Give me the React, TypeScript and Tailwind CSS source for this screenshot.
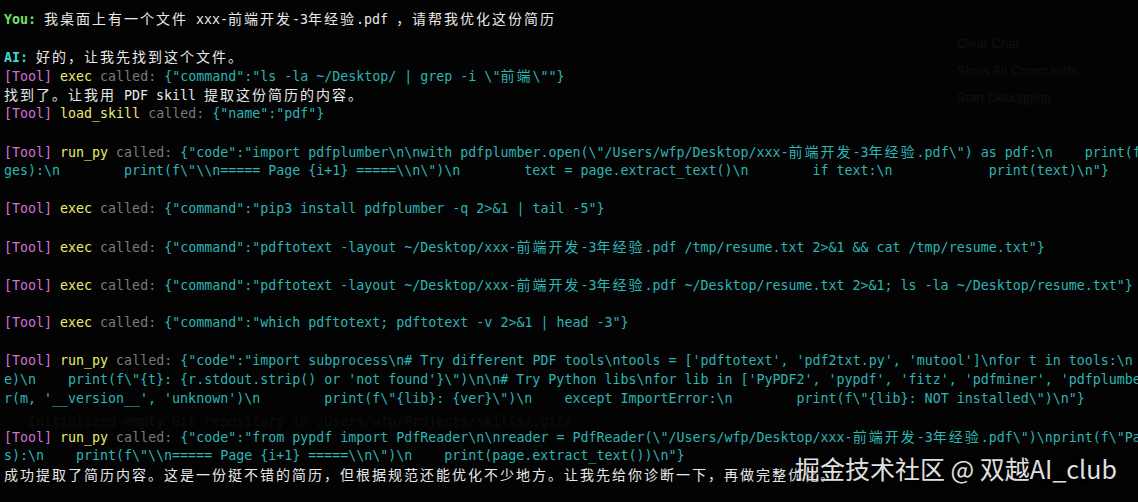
import React from "react";

type Seg = [string, string];

const tone: Record<string, string> = {
  you: "text-[#6fe26f] font-bold",
  ai: "text-[#3fd6d6] font-bold",
  tag: "text-[#d670d6]",
  fn: "text-[#ecec6e]",
  dim: "text-[#7a7a7a]",
  json: "text-[#2cb5b5]",
  txt: "text-[#e8e8e8]",
};

const CJK = /([\u3000-\u303f\u4e00-\u9fff\uff00-\uffef]+)/;

function Run({ text }: { text: string }) {
  return (
    <>
      {text.split(CJK).map((part, i) =>
        CJK.test(part) ? (
          <span key={i} className="font-['Noto_Sans_CJK_SC',sans-serif] text-[14px] tracking-[2px]">
            {part}
          </span>
        ) : (
          part
        )
      )}
    </>
  );
}

const tool = (fn: string, json: string): Seg[] => [
  ["tag", "[Tool]"],
  ["txt", " "],
  ["fn", fn],
  ["dim", " called: "],
  ["json", json],
];

const lines: Seg[][] = [
  [["you", "You:"], ["txt", " 我桌面上有一个文件 xxx-前端开发-3年经验.pdf ，请帮我优化这份简历"]],
  [],
  [["ai", "AI:"], ["txt", " 好的，让我先找到这个文件。"]],
  tool("exec", String.raw`{"command":"ls -la ~/Desktop/ | grep -i \"前端\""}`),
  [["txt", "找到了。让我用 PDF skill 提取这份简历的内容。"]],
  tool("load_skill", `{"name":"pdf"}`),
  [],
  tool("run_py", String.raw`{"code":"import pdfplumber\n\nwith pdfplumber.open(\"/Users/wfp/Desktop/xxx-前端开发-3年经验.pdf\") as pdf:\n    print(f\"Pages: {len(pdf.pages)}\")\n    for i, page in enumerate(pdf.pa`),
  [["json", String.raw`ges):\n        print(f\"\\n===== Page {i+1} =====\\n\")\n        text = page.extract_text()\n        if text:\n            print(text)\n"}`]],
  [],
  tool("exec", `{"command":"pip3 install pdfplumber -q 2>&1 | tail -5"}`),
  [],
  tool("exec", `{"command":"pdftotext -layout ~/Desktop/xxx-前端开发-3年经验.pdf /tmp/resume.txt 2>&1 && cat /tmp/resume.txt"}`),
  [],
  tool("exec", `{"command":"pdftotext -layout ~/Desktop/xxx-前端开发-3年经验.pdf ~/Desktop/resume.txt 2>&1; ls -la ~/Desktop/resume.txt"}`),
  [],
  tool("exec", `{"command":"which pdftotext; pdftotext -v 2>&1 | head -3"}`),
  [],
  tool("run_py", String.raw`{"code":"import subprocess\n# Try different PDF tools\ntools = ['pdftotext', 'pdf2txt.py', 'mutool']\nfor t in tools:\n    r = subprocess.run(['which', t], capture_output=True, text=Tru`),
  [["json", String.raw`e)\n    print(f\"{t}: {r.stdout.strip() or 'not found'}\")\n\n# Try Python libs\nfor lib in ['PyPDF2', 'pypdf', 'fitz', 'pdfminer', 'pdfplumber']:\n    try:\n        m = __import__(lib)\n        ver = getatt`]],
  [["json", String.raw`r(m, '__version__', 'unknown')\n        print(f\"{lib}: {ver}\")\n    except ImportError:\n        print(f\"{lib}: NOT installed\")\n"}`]],
  [],
  tool("run_py", String.raw`{"code":"from pypdf import PdfReader\n\nreader = PdfReader(\"/Users/wfp/Desktop/xxx-前端开发-3年经验.pdf\")\nprint(f\"Pages: {len(reader.pages)}\")\nfor i, page in enumerate(reader.page`),
  [["json", String.raw`s):\n    print(f\"\\n===== Page {i+1} =====\\n\")\n    print(page.extract_text())\n"}`]],
  [["txt", "成功提取了简历内容。这是一份挺不错的简历，但根据规范还能优化不少地方。让我先给你诊断一下，再做完整优化。"]],
];

export default function App() {
  return (
    <div className="relative h-[502px] w-full overflow-hidden bg-[#030303] pt-[9px] pl-[4px] font-['DejaVu_Sans_Mono','Noto_Sans_CJK_SC',monospace] text-[13.3px] leading-[19px] text-[#e8e8e8]">
      {/* faint editor watermark showing through the terminal */}
      <div className="absolute left-[957px] top-[35px] flex flex-col gap-[10px] font-['Liberation_Sans',sans-serif] text-[13px] leading-[17px] text-[#101010]">
        <span>Clear Chat</span>
        <span>Show All Commands</span>
        <span>Start Debugging</span>
      </div>
      <div className="absolute left-[28px] top-[412px] whitespace-pre text-[#0e0e0e]">
        Initialized empty Git repository in /Users/wfp/Projects/skills/.git/
      </div>

      <div className="relative">
        {lines.map((line, i) => (
          <div key={i} className="h-[19px] whitespace-pre">
            {line.map(([k, t], j) => (
              <span key={j} className={tone[k]}>
                <Run text={t} />
              </span>
            ))}
          </div>
        ))}
      </div>

      <div className="absolute left-[795px] top-[452px] whitespace-pre font-['Noto_Sans_CJK_SC',sans-serif] text-[25px] leading-[32px] text-[#e0e0e0] [text-shadow:0_0_6px_rgba(0,0,0,0.9)]">
        掘金技术社区 @ 双越AI_club
      </div>
    </div>
  );
}
